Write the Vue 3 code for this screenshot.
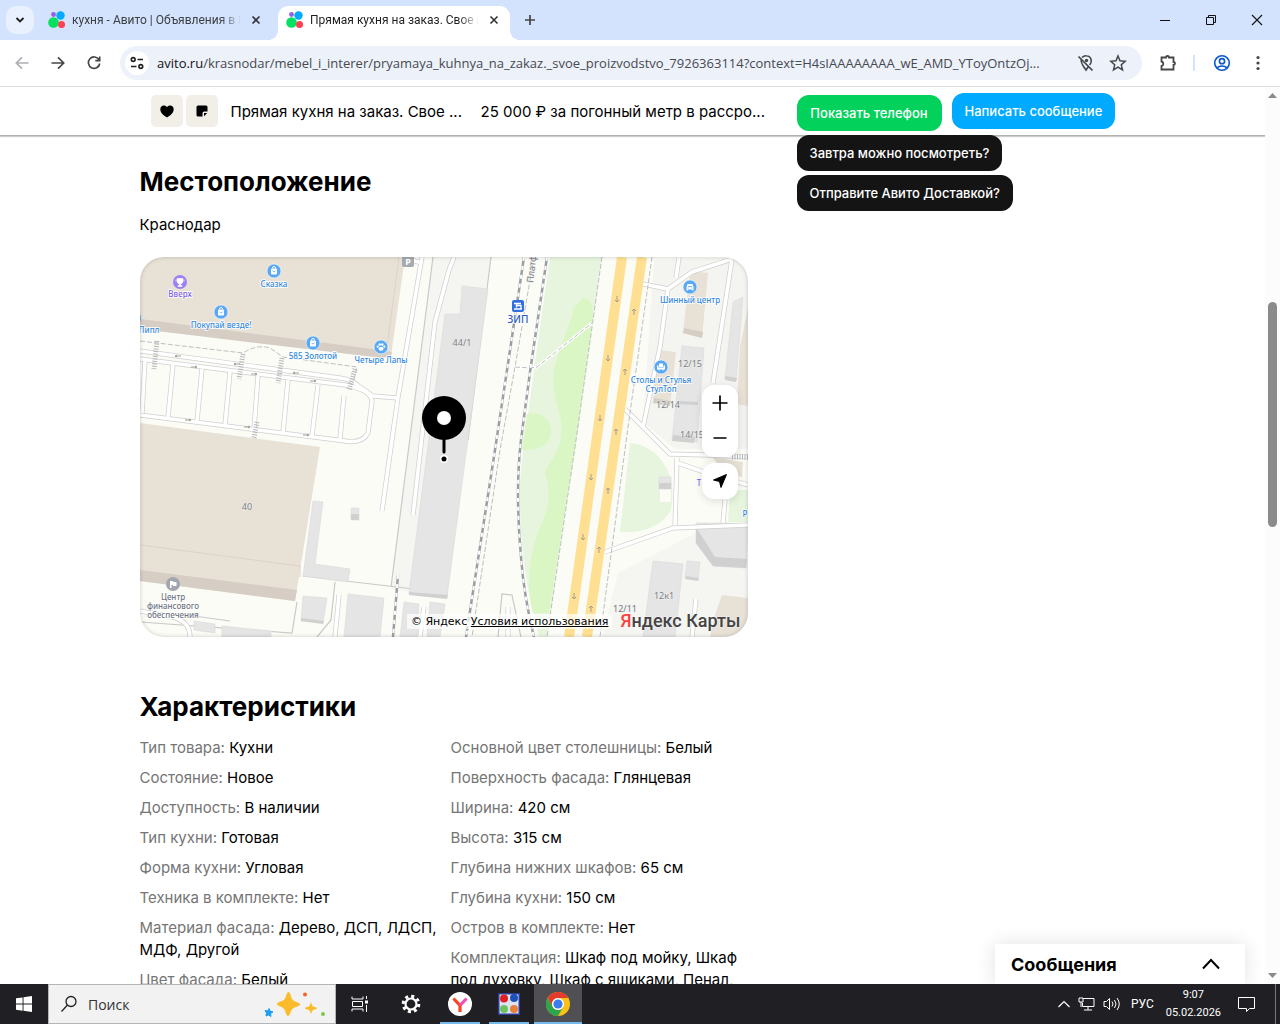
<script setup>
const tabs = [
  { title: 'кухня - Авито | Объявления в Краснодаре', active: false },
  { title: 'Прямая кухня на заказ. Свое производство', active: true },
]

const specs = [
  [
    ['Тип товара', 'Кухни'],
    ['Состояние', 'Новое'],
    ['Доступность', 'В наличии'],
    ['Тип кухни', 'Готовая'],
    ['Форма кухни', 'Угловая'],
    ['Техника в комплекте', 'Нет'],
    ['Материал фасада', 'Дерево, ДСП, ЛДСП, МДФ, Другой'],
    ['Цвет фасада', 'Белый'],
  ],
  [
    ['Основной цвет столешницы', 'Белый'],
    ['Поверхность фасада', 'Глянцевая'],
    ['Ширина', '420 см'],
    ['Высота', '315 см'],
    ['Глубина нижних шкафов', '65 см'],
    ['Глубина кухни', '150 см'],
    ['Остров в комплекте', 'Нет'],
    ['Комплектация', 'Шкаф под мойку, Шкаф под духовку, Шкаф с ящиками, Пенал,'],
  ],
]

const beige = [
  '0,0 265,0 251,99 0,72',
  '0,166 180,190 155,344 0,324',
  '550,14 568,16 562,81 543,76',
  '517,93 536,95 530,149 513,146',
  '608,50 600,90 597,147 608,149',
  '572,200 603,205 602,220 587,218',
  '582,338 608,341 608,380 570,380 575,358',
]
const beigeDark = [
  '0,62 240,93 252,95 251,99 242,101 0,72',
  '0,313 157,333 155,344 0,324',
  '544,71 563,75 562,81 543,76',
  '514,141 531,144 530,149 513,146',
]
const grey = [
  '322,29 348,32 307,340 269,336 305,57 320,57',
  '173,244 183,245 175,307 210,312 208,325 163,319',
  '211,251 219,251 219,263 211,263',
  '542,89 564,91 557,185 532,183',
  '593,45 603,40 596,123 585,122',
  '556,266 587,266 608,270 606,311 573,309 556,286',
  '547,304 560,305 558,323 545,321',
  '513,304 543,307 535,380 503,380',
  '163,339 187,341 183,366 161,364',
  '208,337 244,341 240,380 204,380',
  '264,345 279,347 277,380 260,380',
  '290,345 305,347 300,380 287,380',
  '54,364 75,367 75,376 54,373',
  '82,369 131,374 131,380 82,380',
  '519,220 531,220 531,232 519,232',
]
const greyDark = [
  '269,335 308,338 307,342 269,338',
  '211,257 219,257 219,263 211,263',
  '556,270 575,300 607,302 606,311 573,309 556,286',
  '546,319 559,321 558,324 545,322',
  '161,361 184,364 183,367 161,364',
  '519,226 531,226 531,232 519,232',
  '538,144 558,145 558,148 538,147',
  '585,119 597,121 596,125 585,123',
  '533,178 555,180 554,186 532,184',
]
const roads = [
  'M0,94 L200,121 Q213,123 217,128 L233,139 L258,141',
  'M0,102 L205,128 Q231,133 232,144 L228,176 Q222,187 205,184 L0,158',
  'M5,104 L2,156', 'M33,108 L28,160', 'M62,112 L57,164', 'M90,115 L85,168',
  'M118,119 L114,172', 'M148,123 L143,176', 'M178,128 L172,179', 'M204,139 L200,182',
  'M282,0 L258,140 L242,254', 'M268,2 L282,6',
  'M309,13 L295,65 L273,258', 'M314,0 L309,13',
  'M503,27 L528,32 L552,15 L592,2', 'M528,32 L520,90 L503,170', 'M539,0 L536,21',
  'M592,2 L573,126', 'M485,152 L530,197 L567,198 L608,200', 'M537,201 L535,268',
  'M465,295 L533,271 L608,268', 'M538,206 L567,216 L608,228', 'M585,243 L583,266',
  'M199,338 L195,380', 'M284,350 L280,380', 'M368,350 L368,380', 'M556,342 L552,380',
  'M0,354 L32,360 Q50,364 50,380',
]
const lines = [
  'M293,0 L251,330', 'M163,319 L308,336', 'M157,345 L152,376 L0,365',
  'M195,325 L191,363 L177,380', 'M358,380 L362,337 L372,338 L381,380',
  'M351,0 L328,183', 'M40,357 L90,364',
]
const crossings = ['M17,84 L14,112', 'M103,97 L99,122', 'M142,101 L138,126', 'M215,112 L209,133', 'M117,165 L114,181', 'M592,200 L608,200']
const rails = [
  'M384,0 L355,193 L326,380',
  'M407,0 L390,115 L381,183 Q375,233 381,300 Q384,340 394,380',
  'M258,318 L253,380',
]
const footways = [
  'M394,0 L375,110 L360,193 L332,380', 'M462,0 L436,183 L407,380',
  'M512,0 L488,170 L460,380',
  'M0,84 L103,96 Q117,87 130,91 L143,100 L217,110 L213,126',
]
const arrowsDown = [[477, 42], [468, 101], [460, 161], [451, 220], [443, 280], [434, 339]]
const arrowsUp = [[494, 55], [485, 115], [476, 175], [468, 234], [459, 293], [451, 352]]
const arrowsSide = [[38, 99, -1], [54, 110, 1], [97, 107, -1], [114, 117, 1], [156, 116, -1], [173, 124, 1], [48, 163, 1], [107, 170, 1], [166, 178, 1]]
const places = [
  { x: 134, y: 14, name: ['Сказка'], kind: 'bag' },
  { x: 81, y: 55, name: ['Покупай везде!'], kind: 'bag' },
  { x: 173, y: 86, name: ['585 Золотой'], kind: 'bag' },
  { x: 241, y: 90, name: ['Четыре Лапы'], kind: 'paw' },
  { x: 550, y: 30, name: ['Шинный центр'], kind: 'car' },
  { x: 521, y: 110, name: ['Столы и Стулья', 'СтулТоп'], kind: 'chair' },
]
const houses = [
  [322, 89, '44/1'], [107, 253, '40'], [550, 110, '12/15'], [528, 151, '12/14'],
  [552, 181, '14/15'], [524, 342, '12к1'], [485, 355, '12/11'],
]
</script>

<template>
  <div class="screen">
    <header class="tabstrip">
      <button class="tab-search" aria-label="Поиск вкладок">
        <svg width="12" height="12" viewBox="0 0 12 12"><path d="M2.500 4 6 7.500 9.500 4" fill="none" stroke="#1f1f1f" stroke-width="1.8" /></svg>
      </button>
      <div v-for="tab in tabs" :key="tab.title" class="tab" :class="{ active: tab.active }">
        <svg class="favicon" width="18" height="18" viewBox="0 0 18 18">
          <circle cx="5.500" cy="11.500" r="5.300" fill="#04e061" /><circle cx="12.500" cy="4.500" r="4.200" fill="#0af" />
          <circle cx="13.500" cy="13.500" r="3.500" fill="#ff4053" /><circle cx="5.500" cy="3.500" r="2.400" fill="#965eeb" />
        </svg>
        <span class="tab-title">{{ tab.title }}</span>
        <button class="plain" aria-label="Закрыть вкладку">
          <svg width="10" height="10" viewBox="0 0 10 10"><path d="M1.500 1.500 8.500 8.500M8.500 1.500 1.500 8.500" stroke="#303236" stroke-width="1.6" /></svg>
        </button>
      </div>
      <button class="plain new-tab" aria-label="Новая вкладка">
        <svg width="12" height="12" viewBox="0 0 12 12"><path d="M6 1v10M1 6h10" stroke="#444" stroke-width="1.7" /></svg>
      </button>
      <div class="window-buttons">
        <button class="plain" aria-label="Свернуть"><svg width="12" height="12" viewBox="0 0 12 12"><path d="M1 6.500h10" stroke="#111" /></svg></button>
        <button class="plain" aria-label="Развернуть"><svg width="12" height="12" viewBox="0 0 12 12"><path d="M1.500 3.500h7v7h-7zM3.500 3.500v-2h7v7h-2" fill="none" stroke="#111" /></svg></button>
        <button class="plain" aria-label="Закрыть"><svg width="12" height="12" viewBox="0 0 12 12"><path d="M1 1l10 10M11 1 1 11" stroke="#111" stroke-width="1.1" /></svg></button>
      </div>
    </header>

    <nav class="toolbar">
      <button class="plain nav" aria-label="Назад"><svg width="16" height="16" viewBox="0 0 16 16"><path d="M14.500 8H2.500M8 2.300 2.300 8 8 13.700" fill="none" stroke="#adafb3" stroke-width="1.7" /></svg></button>
      <button class="plain nav" aria-label="Вперёд"><svg width="16" height="16" viewBox="0 0 16 16"><path d="M1.500 8h12M8 2.300 13.700 8 8 13.700" fill="none" stroke="#44474a" stroke-width="1.7" /></svg></button>
      <button class="plain nav" aria-label="Обновить"><svg width="16" height="16" viewBox="0 0 16 16"><path d="M13 4.800A5.700 5.700 0 1 0 13.700 8.500M13.700 1.500v4.200H9.300" fill="none" stroke="#44474a" stroke-width="1.7" /></svg></button>
      <div class="omnibox">
        <button class="site" aria-label="Сведения о сайте">
          <svg width="14" height="14" viewBox="0 0 14 14"><g fill="none" stroke="#1f1f1f" stroke-width="1.6"><circle cx="3.200" cy="3.500" r="1.900" /><path d="M7.500 3.500h5.500M1 10.500h5.500" /><circle cx="10.800" cy="10.500" r="1.900" /></g></svg>
        </button>
        <span class="url"><b>avito.ru</b>/krasnodar/mebel_i_interer/pryamaya_kuhnya_na_zakaz._svoe_proizvodstvo_7926363114?context=H4sIAAAAAAAA_wE_AMD_YToyOntzOj...</span>
        <button class="plain" aria-label="Геоданные"><svg width="18" height="18" viewBox="0 0 18 18"><path d="M5 3.500Q7 1.500 9.500 1.800C13 2 15 5 14 8.500L12.700 11M4.300 5.500C3.500 9.500 7 13 9 16L11.500 12.500" fill="none" stroke="#44474a" stroke-width="1.600" /><path d="M1.500 2.500 15.500 16.500" stroke="#44474a" stroke-width="1.700" /><circle cx="9.500" cy="6.500" r="1.700" fill="#44474a" /></svg></button>
        <button class="plain" aria-label="В закладки"><svg width="18" height="18" viewBox="0 0 18 18"><path d="M9 2 11 6.800l5.200.5-3.900 3.500 1.200 5.100L9 13.200l-4.500 2.700 1.200-5.100L1.800 7.300 7 6.800z" fill="none" stroke="#44474a" stroke-width="1.500" /></svg></button>
      </div>
      <button class="plain ext" aria-label="Расширения"><svg width="18" height="18" viewBox="0 0 18 18"><path d="M2.500 3.500h4.500a1.500 1.500 0 0 1 3 0h4.500v4.500a1.500 1.500 0 0 1 0 3v4.500h-12v-3.500a2.300 2.300 0 0 0 0-4.500z" fill="none" stroke="#44474a" stroke-width="1.800" /></svg></button>
      <i class="divider"></i>
      <button class="plain profile" aria-label="Профиль"><svg width="18" height="18" viewBox="0 0 18 18"><g fill="none" stroke="#0b57d0" stroke-width="1.600"><circle cx="9" cy="9" r="7.300" /><circle cx="9" cy="7.200" r="2.600" /><path d="M3.800 14C6.500 11.300 11.500 11.300 14.200 14" /></g></svg></button>
      <button class="plain menu" aria-label="Меню"><svg width="4" height="16" viewBox="0 0 4 16" fill="#44474a"><circle cx="2" cy="2.500" r="1.600" /><circle cx="2" cy="8" r="1.600" /><circle cx="2" cy="13.500" r="1.600" /></svg></button>
    </nav>

    <div class="viewport">
      <div class="page">
        <div class="sticky">
          <div class="sticky-row">
            <div class="item">
              <button class="square" aria-label="В избранное"><svg width="14" height="13" viewBox="0 0 14 13"><path d="M7 12.500C3 10 .3 7.500.3 4.200.3 1.800 2 .5 3.800.5 5.200.5 6.400 1.200 7 2.200 7.600 1.200 8.800.5 10.200.5c1.800 0 3.500 1.300 3.500 3.700C13.700 7.500 11 10 7 12.500z" /></svg></button>
              <button class="square" aria-label="Заметка"><svg width="12" height="12" viewBox="0 0 12 12"><path d="M2 .5h8A1.500 1.500 0 0 1 11.500 2v4.500H8.300A1.800 1.800 0 0 0 6.500 8.300v3.200H2A1.500 1.500 0 0 1 .5 10V2A1.500 1.500 0 0 1 2 .5zM8 11.200V8h3.200z" /></svg></button>
              <span class="title">Прямая кухня на заказ. Свое ...</span>
              <span class="price">25 000 ₽ за погонный метр в рассро...</span>
            </div>
            <div class="contact">
              <button class="pill phone">Показать телефон</button>
              <button class="pill quick">Завтра можно посмотреть?</button>
              <button class="pill quick">Отправите Авито Доставкой?</button>
            </div>
            <button class="pill write">Написать сообщение</button>
          </div>
        </div>

        <main class="content">
          <section>
            <h2>Местоположение</h2>
            <p class="city">Краснодар</p>
            <div class="map">
              <svg class="map-canvas" viewBox="0 0 608 380" preserveAspectRatio="xMidYMid slice">
                <rect width="608" height="380" fill="#fbfcf6" />
                <polygon points="293,0 352,0 345,32 307,340 251,332" fill="#f5f6f2" />
                <polygon points="514,3 608,0 608,192 535,192 503,165" fill="#f4f5f1" />
                <polygon points="478,316 556,276 608,268 608,380 462,380" fill="#f5f6f2" />
                <path d="M410,0H462L407,380H399L393,356Q378,290 380,225L383,193L395,106z" fill="#e7f5de" />
                <path d="M443,41C452,41 453,50 453,63L435,193L409,356H393C386,330 388,305 398,275C412,245 410,235 405,215C412,200 420,195 421,177C424,160 413,145 413,120C415,100 430,70 434,50z" fill="#daf6c5" />
                <path d="M387,157C403,153 412,165 411,176C409,190 395,195 382,192z" fill="#daf6c5" />
                <path d="M490,186C515,188 528,209 532,226Q533,250 530,255Q515,277 480,275z" fill="#e7f5de" />
                <path d="M590,233H608V265H588z" fill="#e7f5de" /><path d="M520,232H531V245H520z" fill="#fbfcf6" />
                <path v-for="d in lines" :key="d" :d="d" class="line" />
                <polygon v-for="p in beige" :key="p" :points="p" fill="#e8e1d6" />
                <polygon v-for="p in beigeDark" :key="p" :points="p" fill="#d6cdc4" />
                <path d="M0,288 160,309V320M259,0 247,90" fill="none" stroke="#dcd2c8" />
                <polygon v-for="p in grey" :key="p" :points="p" fill="#e5e5e5" stroke="#dadada" stroke-width=".6" />
                <polygon v-for="p in greyDark" :key="p" :points="p" fill="#d0d0d0" />
                <path v-for="d in roads" :key="'c' + d" :d="d" class="road-case" />
                <path v-for="d in roads" :key="'r' + d" :d="d" class="road" />
                <path v-for="d in footways" :key="d" :d="d" class="footway" />
                <path d="M375,110 390,111 397,110 452,66" fill="none" stroke="#fff" stroke-width="3" />
                <path d="M375,110 390,111 397,110 452,66" class="footway" />
                <path v-for="d in crossings" :key="d" :d="d" class="crossing" />
                <g v-for="d in rails" :key="d"><path :d="d" class="rail" /><path :d="d" class="rail-gap" /></g>
                <path d="M482,0 429,380M502,0 447,380" stroke="#ffdf92" stroke-width="10" />
                <g class="arrow">
                  <path v-for="[x, y] in arrowsDown" :key="'d' + y" :d="`M${x},${y - 3}v6m-2,-2l2,2 2,-2`" />
                  <path v-for="[x, y] in arrowsUp" :key="'u' + y" :d="`M${x},${y + 3}v-6m-2,2l2,-2 2,2`" />
                  <path v-for="[x, y, s] in arrowsSide" :key="'s' + x" :d="`M${x - 3 * s},${y}h${6 * s}m${-2 * s},-1l${2 * s},1 ${-2 * s},1`" />
                </g>
                <g v-for="p in places" :key="p.x" class="place">
                  <circle :cx="p.x" :cy="p.y" r="7" fill="#58a8f5" stroke="#fff" stroke-width=".6" />
                  <g :transform="`translate(${p.x} ${p.y})`" fill="#fff">
                    <template v-if="p.kind === 'bag'"><rect x="-3" y="-2.500" width="6" height="6" rx="1" /><path d="M-1.500-2.500v-.5a1.500 1.500 0 0 1 3 0v.5" fill="none" stroke="#fff" /><path d="M-1.500 0Q0 2 1.500 0" fill="none" stroke="#58a8f5" stroke-width=".8" /></template>
                    <template v-else-if="p.kind === 'paw'"><ellipse cy="1.800" rx="2.500" ry="2" /><circle cx="-3.300" cy="-.3" r="1.100" /><circle cx="3.300" cy="-.3" r="1.100" /><circle cx="-1.300" cy="-2.500" r="1.200" /><circle cx="1.300" cy="-2.500" r="1.200" /></template>
                    <template v-else-if="p.kind === 'car'"><path d="M-2.500-3h5L3.500 0v3.500H2V2.500h-4v1h-1.500V0z" /><path d="M-2-.5h4M-2.500 1h1M1.500 1h1" stroke="#58a8f5" stroke-width=".8" /></template>
                    <template v-else><path d="M-2-3.500h4V0h-4zM-4-1.500h1.500v2h5v-2H4V2.500H2.500v1h-1v-1h-3v1h-1v-1H-4z" /></template>
                  </g>
                  <text v-for="(n, i) in p.name" :key="n" :x="p.x" :y="p.y + 16 + i * 9">{{ n }}</text>
                </g>
                <g class="place violet">
                  <circle cx="40" cy="25" r="7" fill="#9c80f5" /><path d="M37,21.500h6v2.500q0,2.500-2.500,3v1.500h1.500v1h-4v-1h1.500v-1.500q-2.500-.5-2.500-3zM36,22.500v2M44,22.500v2" fill="#fff" stroke="#fff" stroke-width=".6" />
                  <text x="40" y="40">Вверх</text><text x="559" y="229">Т</text>
                </g>
                <g class="place"><text x="9" y="76">Пипл</text><text x="605" y="260">Р</text><circle cx="-6" cy="61" r="7" fill="#58a8f5" /></g>
                <g class="place slate">
                  <circle cx="33" cy="327" r="7" fill="#a3a6ad" /><path d="M30,331v-7h3v1h3.500v4H33v-1h-1.500v3z" fill="#fff" />
                  <text x="33" y="343">Центр</text><text x="33" y="352">финансового</text><text x="33" y="361">обеспечения</text>
                </g>
                <rect x="262" y="-4" width="12" height="14" rx="2" fill="#a7aaae" /><text x="268" y="8" class="parking">P</text>
                <rect x="372" y="43" width="12" height="12" rx="2" fill="#2f6fe0" /><path d="M374,46.500h7M376.500,46.500v4M376.500,48.500h4.500v3M374,52h8" fill="none" stroke="#fff" stroke-width="1.300" />
                <text x="378" y="66" class="station">ЗИП</text>
                <text class="house vertical" transform="translate(393 26) rotate(-83)">Платф</text>
                <text v-for="[x, y, n] in houses" :key="n" :x="x" :y="y" class="house">{{ n }}</text>
                <circle cx="304" cy="161" r="22" /><circle cx="304" cy="161" r="7" fill="#fff" />
                <path d="M304,180v15" stroke="#000" stroke-width="3" stroke-linecap="round" />
                <circle cx="304" cy="202" r="4" fill="#fff" /><circle cx="304" cy="202" r="2.500" />
              </svg>
              <div class="controls">
                <div class="zoom">
                  <button class="plain" aria-label="Приблизить"><svg width="16" height="16" viewBox="0 0 16 16"><path d="M8 .5v15M.5 8h15" stroke="#000" stroke-width="1.700" /></svg></button>
                  <button class="plain" aria-label="Отдалить"><svg width="16" height="16" viewBox="0 0 16 16"><path d="M1.500 8h13" stroke="#000" stroke-width="1.700" /></svg></button>
                </div>
                <button class="locate" aria-label="Моё местоположение"><svg width="16" height="16" viewBox="0 0 16 16"><path d="M14.500 1.500 1.500 7l6 1.500L9 14.500z" stroke="#000" stroke-linejoin="round" /></svg></button>
              </div>
              <div class="legal">
                <span class="copy">© Яндекс <a href="#">Условия использования</a></span>
                <span class="ya"><em>Я</em>ндекс Карты</span>
              </div>
            </div>
          </section>
          <section class="about">
            <h2>Характеристики</h2>
            <div class="specs">
              <ul v-for="(col, i) in specs" :key="i">
                <li v-for="[k, v] in col" :key="k"><span>{{ k }}:</span> {{ v }}</li>
              </ul>
            </div>
          </section>
        </main>
        <button class="messages">
          Сообщения
          <svg width="18" height="12" viewBox="0 0 18 12"><path d="M1 10.500 9 2l8 8.500" fill="none" stroke="#000" stroke-width="2" /></svg>
        </button>
      </div>
      <div class="scrollbar">
        <svg width="9" height="5" viewBox="0 0 9 5"><path d="M0 5 4.500 0 9 5z" fill="#8b8b8b" /></svg>
        <div class="track"><i></i></div>
        <svg width="9" height="5" viewBox="0 0 9 5"><path d="M0 0 4.500 5 9 0z" fill="#8b8b8b" /></svg>
      </div>
    </div>

    <footer class="taskbar">
      <button class="plain slot" aria-label="Пуск"><svg width="16" height="16" viewBox="0 0 16 16"><path d="M0 2.300 6.600 1.400v6.200H0zM7.500 1.200 16 0v7.600H7.500zM0 8.500h6.600v6.200L0 13.800zM7.500 8.500H16V16l-8.500-1.200z" fill="#fff" /></svg></button>
      <label class="search">
        <svg width="18" height="18" viewBox="0 0 18 18"><g fill="none" stroke="#222" stroke-width="1.300"><circle cx="11" cy="6.500" r="5" /><path d="M7.500 10 1.500 16.500" /></g></svg>
        <input type="text" value="Поиск" aria-label="Поиск" />
        <svg width="62" height="30" viewBox="0 0 62 30">
          <path d="M24.500 3Q26 3 27.500 9 28.500 11.500 31 12.500 36 14 36 15.500T30.500 18.500Q28 19.500 27 22 25.500 27 24 27T21 21.500Q20 19 17.500 18 13 16.500 13 15T18 12Q20.500 11 21.500 8.500 23 3 24.500 3z" fill="#fbbc2c" />
          <path d="M47 13q1 4 2 4.500 4 1 4 1.700t-4 1.800q-1 .8-2 4-1-3-2-4-4-1-4-1.800t4-1.700q1-1 2-4.500z" fill="#fbbc2c" />
          <path d="M5 19.500 6 22l3 1-2.500 1.500.5 3L4.500 26 2 27l.5-3L1 21.500l3 .5z" fill="#1b9df0" stroke="#1b9df0" />
          <circle cx="41" cy="5.500" r="2" fill="#f2632c" /><circle cx="59" cy="25" r="2" fill="#7ac943" />
        </svg>
      </label>
      <button class="plain slot" aria-label="Представление задач"><svg width="18" height="16" viewBox="0 0 18 16"><path d="M1 .5v2.500h11V.5M1.500 5.500h10v5h-10zM1 15.500V13h11v2.500M15.500 0v3M15.500 9v7" fill="none" stroke="#fff" /><rect x="14" y="4.500" width="3" height="3" fill="#fff" /></svg></button>
      <div class="apps">
        <button class="plain slot" aria-label="Параметры"><svg width="20" height="20" viewBox="0 0 20 20"><g fill="none" stroke="#fff"><circle cx="10" cy="10" r="5.500" stroke-width="2.200" /><circle cx="10" cy="10" r="7.800" stroke-width="3" stroke-dasharray="3.060 3.060" /></g></svg></button>
        <button class="plain slot open" aria-label="Яндекс Браузер"><svg width="24" height="24" viewBox="0 0 24 24"><circle cx="12" cy="12" r="12" fill="#fff" /><path d="M5.500 6.500 12 13.500v6.500" fill="none" stroke="#fb4520" stroke-width="3.200" /><path d="M12 13.500 18.500 6.500" stroke="#f04fb4" stroke-width="3.200" /></svg></button>
        <button class="plain slot open" aria-label="Приложение"><svg width="22" height="24" viewBox="0 0 22 24"><rect x="0" y="1" width="22" height="22" fill="#283c9d" /><rect x="1.500" y="2.500" width="19" height="19" fill="#dfe3f1" /><circle cx="6" cy="6.500" r="4" fill="#e02020" /><circle cx="16" cy="6" r="4" fill="#1c52b8" /><circle cx="6" cy="17" r="4" fill="#6cc25c" /><circle cx="16" cy="17" r="4" fill="#e8803c" /></svg></button>
        <button class="plain slot open current" aria-label="Google Chrome"><svg width="24" height="24" viewBox="0 0 24 24"><circle cx="12" cy="12" r="12" fill="#fbc116" /><path d="M1.600 6A12 12 0 0 1 22.400 6H12A6 6 0 0 0 6.800 15z" fill="#e33b2e" /><path d="M1.600 6 6.800 15A6 6 0 0 0 17.200 15L12 24A12 12 0 0 1 1.600 6z" fill="#2da44e" /><circle cx="12" cy="12" r="6" fill="#fff" /><circle cx="12" cy="12" r="4.600" fill="#3b7ded" /></svg></button>
      </div>
      <div class="tray">
        <svg width="12" height="8" viewBox="0 0 12 8"><path d="M.5 7 6 1.500 11.500 7" fill="none" stroke="#fff" stroke-width="1.200" /></svg>
        <svg width="17" height="14" viewBox="0 0 17 14"><path d="M5 1.500h11v8H4.500V6M10 10v3M6 13h8M1 1h4v4H1zM3 5v5" fill="none" stroke="#fff" /></svg>
        <svg width="18" height="14" viewBox="0 0 18 14"><path d="M1 4.500h2.500L6.500 1.500v11L3.500 9.500H1zM9 4.500q2 2.500 0 5M11.500 3q3 4 0 8M14 1q4.500 6 0 12" fill="none" stroke="#fff" /></svg>
        <span class="lang">РУС</span>
        <time class="clock">9:07<br />05.02.2026</time>
        <svg width="17" height="17" viewBox="0 0 17 17"><path d="M.5 1.500h16v11h-5l-3 3v-3h-8z" fill="none" stroke="#fff" /></svg>
        <i class="peek"></i>
      </div>
    </footer>
  </div>
</template>

<style>
body { margin: 0; }
</style>

<style scoped>
.screen { display: flex; flex-direction: column; height: 100vh; overflow: hidden; background: #fff; font-family: Inter, "Noto Sans", sans-serif; color: #000; }
.screen * { box-sizing: border-box; }
button { font: inherit; cursor: pointer; }
svg { display: block; flex: none; }
.plain { display: flex; align-items: center; justify-content: center; padding: 0; border: 0; background: none; }

.tabstrip { display: flex; flex: none; align-items: center; height: 40px; padding-left: 6px; background: #d3e2fd; font: 12px Roboto, sans-serif; }
.tab-search { display: flex; align-items: center; justify-content: center; width: 28px; height: 28px; margin-right: 6px; padding: 0; border: 0; border-radius: 10px; background: #e9f0fe; }
.tab { position: relative; display: flex; align-items: center; width: 232px; height: 34px; margin-top: 6px; padding: 0 11px 6px 8px; }
.tab + .tab { margin-left: 6px; }
.tab.active { border-radius: 10px 10px 0 0; background: #fff; }
.tab.active::before, .tab.active::after { content: ""; position: absolute; bottom: 0; width: 10px; height: 10px; }
.tab.active::before { right: 100%; background: radial-gradient(circle at 0 0, transparent 10px, #fff 10px); }
.tab.active::after { left: 100%; background: radial-gradient(circle at 100% 0, transparent 10px, #fff 10px); }
.tab-title { flex: 1; margin: 0 10px 0 6px; overflow: hidden; white-space: nowrap; color: #3c4043; mask-image: linear-gradient(90deg, #000 88%, transparent); }
.active .tab-title { color: #1f1f1f; }
.new-tab { margin-left: 14px; }
.window-buttons { display: flex; margin-left: auto; }
.window-buttons button { width: 46px; height: 40px; }

.toolbar { display: flex; flex: none; align-items: center; height: 47px; padding: 0 20px 0 14px; border-bottom: 1px solid #dcdfe3; background: #fff; }
.nav { width: 16px; margin-right: 20px; }
.omnibox { display: flex; flex: 1; align-items: center; min-width: 0; height: 34px; margin: 0 17px 0 -2px; padding: 0 15px 0 5px; border-radius: 17px; background: #edf1fa; }
.site { display: flex; align-items: center; justify-content: center; width: 24px; height: 24px; margin-right: 8px; padding: 0; border: 0; border-radius: 50%; background: #fff; }
.url { flex: 1; overflow: hidden; white-space: nowrap; text-overflow: ellipsis; font: 13px/20px "Open Sans", sans-serif; color: #474a4f; }
.url b { font-weight: 400; color: #111; }
.omnibox .plain { margin-left: 14px; }
.divider { width: 2px; height: 16px; margin: 0 18px 0 16px; background: #d3e2fd; }
.menu { margin-left: 25px; }

.viewport { display: flex; flex: 1; min-height: 0; }
.page { position: relative; display: flex; flex: 1; flex-direction: column; min-width: 0; overflow: hidden; }
.sticky { position: relative; z-index: 1; flex: none; height: 49px; border-bottom: 1px solid #b2b2b2; background: #fff; box-shadow: 0 1px 1px rgba(0, 0, 0, .2); }
.sticky-row { display: flex; align-items: flex-start; max-width: 986px; margin: 0 auto; padding: 6px 0 0 11px; }
.item { display: flex; align-items: center; width: 646px; height: 36px; font-size: 15px; white-space: nowrap; }
.square { display: flex; align-items: center; justify-content: center; width: 32px; height: 32px; margin-right: 3px; padding: 0; border: 0; border-radius: 5px; background: #f2eee8; }
.title { width: 250px; margin-left: 10px; }
.contact { display: flex; flex-direction: column; align-items: flex-start; gap: 4px; width: 145px; height: 36px; margin: 2px 10px 0 0; }
.pill { flex: none; height: 36px; padding: 0 13px; border: 0; border-radius: 12px; font-size: 13px; font-weight: 500; white-space: nowrap; color: #fff; }
.phone { width: 100%; background: #02d15c; }
.write { background: #0af; }
.quick { background: #141414; }

.content { width: 100%; max-width: 986px; margin: 0 auto; padding-top: 30px; }
h2 { margin: 0; font-size: 26px; line-height: 32px; font-weight: 700; }
.city { margin: 16px 0 21px; font-size: 15px; line-height: 22px; }
.map { position: relative; width: 608px; max-width: 100%; height: 380px; border-radius: 24px; overflow: hidden; }
.map::after { content: ""; position: absolute; inset: 0; border-radius: 24px; box-shadow: inset 0 0 4px rgba(0, 0, 0, .2); pointer-events: none; }
.map-canvas { width: 100%; height: 100%; }
.line { fill: none; stroke: #c9c9c9; stroke-width: 1.2; }
.road-case { fill: none; stroke: #cfcfcf; stroke-width: 5; }
.road { fill: none; stroke: #fff; stroke-width: 3.600; }
.footway { fill: none; stroke: #bcbfc2; stroke-width: 1; stroke-dasharray: 5 2; }
.crossing { fill: none; stroke: #b4b6b8; stroke-width: 5; stroke-dasharray: 1 1.500; }
.rail { fill: none; stroke: #9a9fa3; stroke-width: 2.500; }
.rail-gap { fill: none; stroke: #fff; stroke-width: 2; stroke-dasharray: 4 5; }
.arrow { fill: none; stroke: #a39d90; stroke-width: 1; }
.map text { text-anchor: middle; font-family: "Noto Sans", sans-serif; font-size: 8px; paint-order: stroke; stroke: #fff; stroke-width: 1.500px; }
.place text { font-weight: 500; fill: #3388df; }
.place.violet text { fill: #7f5fe8; }
.place.slate text { fill: #6f7682; }
.map .house { font-size: 9px; fill: #7b7e82; stroke: #eee; stroke-width: 1px; }
.map .vertical { text-anchor: start; }
.map .parking { font-size: 9px; font-weight: 700; fill: #fff; stroke: none; }
.map .station { font-size: 10px; font-weight: 500; fill: #2a5bbd; }
.controls { position: absolute; top: 128px; right: 10px; display: flex; flex-direction: column; gap: 6px; }
.zoom, .locate { width: 36px; border: 0; border-radius: 12px; background: #fff; box-shadow: 0 2px 8px rgba(0, 0, 0, .12); }
.zoom { padding-bottom: 2px; }
.zoom button { width: 36px; height: 35px; }
.locate { display: flex; align-items: center; justify-content: center; height: 36px; padding: 0; }
.legal { position: absolute; right: 7px; bottom: 5px; display: flex; align-items: center; gap: 8px; }
.copy { padding: 0 4px; background: rgba(255, 255, 255, .7); font: 11px/15px "DejaVu Sans", sans-serif; white-space: nowrap; }
.copy a { color: inherit; }
.ya { font: 500 18px/22px Roboto, sans-serif; color: #444; white-space: nowrap; text-shadow: 0 0 2px #fff; }
.ya em { font-style: normal; color: #fc4040; }
.about { margin-top: 54px; }
.specs { display: flex; gap: 11px; margin-top: 14px; font-size: 15px; line-height: 22px; }
.specs ul { width: 300px; margin: 0; padding: 0; list-style: none; }
.specs li { margin-bottom: 8px; }
.specs span { color: #757575; }
.messages { position: absolute; right: 20px; bottom: 0; display: flex; align-items: center; justify-content: space-between; width: 250px; height: 40px; padding: 0 25px 0 16px; border: 0; background: #fff; box-shadow: 0 0 20px rgba(0, 0, 0, .12); font-size: 18px; font-weight: 700; color: #000; }
.scrollbar { display: flex; flex: none; flex-direction: column; align-items: center; width: 15px; padding: 6px 0; background: #fcfcfc; }
.track { display: flex; flex: 1; justify-content: center; padding-top: 204px; }
.track i { width: 9px; height: 225px; border-radius: 5px; background: #8b8b8b; }

.taskbar { display: flex; flex: none; height: 40px; background: #202024; font-family: "Open Sans", sans-serif; }
.slot { width: 48px; height: 40px; }
.search { display: flex; align-items: center; width: 288px; padding: 0 9px 0 11px; border: 1px solid #b5b5b5; background: #f2f2f2; }
.search input { flex: 1; min-width: 0; padding: 0; margin-left: 10px; border: 0; outline: 0; background: none; font: 14px "Open Sans", sans-serif; color: #333; }
.apps { display: flex; gap: 1px; margin-left: 3px; }
.open { background: linear-gradient(#76b9ed, #76b9ed) center bottom / 40px 2px no-repeat; }
.current { background: linear-gradient(#76b9ed, #76b9ed) center bottom / 100% 2px no-repeat #505054; }
.tray { display: flex; align-items: center; gap: 8px; margin-left: auto; color: #fff; font: 12px Roboto, sans-serif; }
.lang { margin-left: 2px; }
.clock { margin: 0 9px 0 4px; font-size: 11px; line-height: 18px; text-align: center; }
.peek { width: 1px; height: 40px; margin: 0 4px 0 12px; background: #77777a; }
</style>
